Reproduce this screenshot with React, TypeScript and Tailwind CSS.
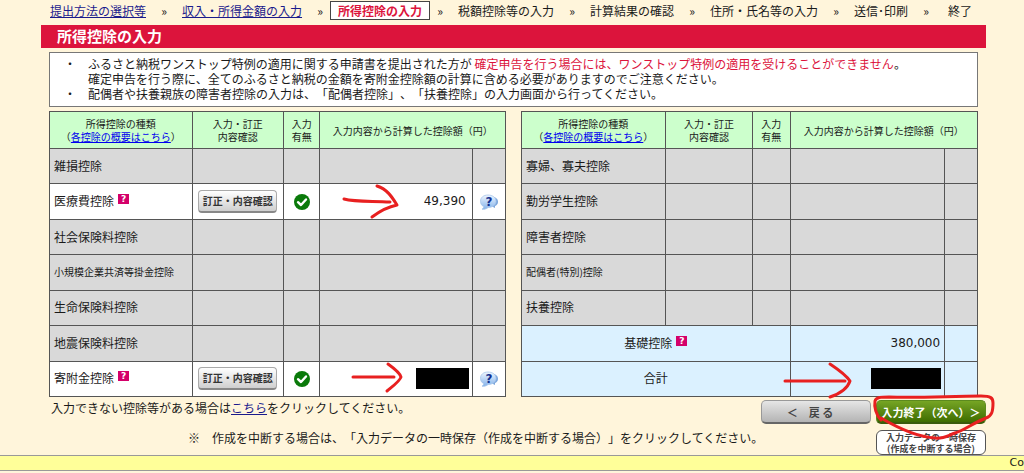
import type { ReactNode } from "react"

type Row = {
    name: string
    small?: boolean
    help?: boolean
    active?: boolean
    amount?: string
    hidden?: boolean
    arrow?: ReactNode
}

const steps = ["税額控除等の入力", "計算結果の確認", "住所・氏名等の入力", "送信･印刷"]

function Arrow({ shaft, head, className }: { shaft: string, head: string, className: string }) {
    return (
        <svg className={`absolute pointer-events-none ${className}`} width="70" height="40" viewBox="0 0 70 40" fill="none" stroke="#e82020" strokeWidth="3" strokeLinecap="round" strokeLinejoin="round" aria-hidden="true">
            <path d={shaft} />
            <path d={head} />
        </svg>
    )
}

const leftRows: Row[] = [
    { name: "雑損控除" },
    {
        name: "医療費控除",
        help: true,
        active: true,
        amount: "49,390",
        arrow: <Arrow className="right-[67px] -top-px" shaft="M9 16C20 19 35 18 55 19" head="M42 3C52 6 57 14 62 22C52 24 45 28 37 34" />,
    },
    { name: "社会保険料控除" },
    { name: "小規模企業共済等掛金控除", small: true },
    { name: "生命保険料控除" },
    { name: "地震保険料控除" },
    {
        name: "寄附金控除",
        help: true,
        active: true,
        hidden: true,
        arrow: <Arrow className="right-[67px] -top-px" shaft="M18 16H59" head="M53 3C60 8 65 12 66 16C65 20 58 25 52 30" />,
    },
]

const rightRows: Row[] = [
    { name: "寡婦、寡夫控除" },
    { name: "勤労学生控除" },
    { name: "障害者控除" },
    { name: "配偶者(特別)控除", small: true },
    { name: "扶養控除" },
]

const cell = "border border-[#555] p-0"

function Sep() {
    return <span className="w-9 shrink-0 text-center">»</span>
}

function HelpMark() {
    return (
        <button type="button" aria-label="ヘルプ" className="ml-1 inline-flex h-[10px] w-[11px] items-center justify-center bg-[#d4006a] align-[4px] font-['DejaVu_Sans',sans-serif] text-[9px] leading-[10px] font-bold text-white">
            ?
        </button>
    )
}

function CheckMark() {
    return (
        <svg className="mx-auto block" width="16" height="16" viewBox="0 0 16 16" role="img" aria-label="入力あり">
            <circle cx="8" cy="8" r="8" fill="#0a7a0a" />
            <path d="M4 8.2L7 11L12 5.5" fill="none" stroke="#fff" strokeWidth="2.4" strokeLinecap="round" strokeLinejoin="round" />
        </svg>
    )
}

function HelpBubble() {
    return (
        <button type="button" aria-label="計算の説明" className="mx-auto block">
            <svg width="18" height="16" viewBox="0 0 18 16">
                <defs>
                    <linearGradient id="bubble" x1="0" y1="0" x2="0" y2="1">
                        <stop offset="0" stopColor="#eef6ff" />
                        <stop offset="1" stopColor="#84b2ea" />
                    </linearGradient>
                </defs>
                <path d="M12 3C16 3 18 5 18 8C18 10 16.500 11.500 15 12L15 14L12 12.500Z" fill="#7ba6dc" />
                <path d="M8 1C12.500 1 16 3.500 16 7.200C16 11 12.500 13.500 8 13.500C7 14.800 4.500 15.500 2 15.300C3 14.600 3.700 13.600 3.600 12.600C1.500 11.500 0.500 9.500 0.500 7.200C0.500 3.500 3.500 1 8 1Z" fill="url(#bubble)" stroke="#a9c6ea" strokeWidth="0.800" />
                <text x="9" y="12" textAnchor="middle" fontSize="12" fontWeight="700" fill="#12308f" fontFamily="DejaVu Sans, sans-serif">?</text>
            </svg>
        </button>
    )
}

function TableHead() {
    return (
        <thead>
            <tr className="h-[37px] bg-[#ccffcc] text-[10px] leading-[13px]">
                <th className={`${cell} font-normal`}>
                    所得控除の種類<br />
                    （<a href="#gaiyo" className="text-[#0000ee] underline">各控除の概要はこちら</a>）
                </th>
                <th className={`${cell} font-normal`}>入力・訂正<br />内容確認</th>
                <th className={`${cell} font-normal`}>入力<br />有無</th>
                <th colSpan={2} className={`${cell} font-normal`}>入力内容から計算した控除額（円）</th>
            </tr>
        </thead>
    )
}

function DeductionRow({ row }: { row: Row }) {
    return (
        <tr className={`h-[35px] ${row.active ? "bg-white" : "bg-[#d9d9d9]"}`}>
            <td className={`${cell} pb-0.5 pl-1 ${row.small ? "text-[10px]" : ""}`}>
                {row.name}
                {row.help && <HelpMark />}
            </td>
            <td className={cell}>
                {row.active && (
                    <button type="button" className="mx-auto block h-[23px] w-[79px] rounded-[4px] border border-[#aaa] border-b-2 border-b-[#888] bg-linear-to-b from-white to-[#cfcfcf] text-[10px] leading-[20px] font-bold text-[#333]">
                        訂正・内容確認
                    </button>
                )}
            </td>
            <td className={cell}>{row.active && <CheckMark />}</td>
            <td className={`${cell} relative text-right font-['DejaVu_Sans',sans-serif]`}>
                {row.amount && <span className="pr-[6px]">{row.amount}</span>}
                {row.hidden && <div className="mr-[3px] ml-auto h-[21px] w-[53px] bg-black"></div>}
                {row.arrow}
            </td>
            <td className={cell}>{row.active && <HelpBubble />}</td>
        </tr>
    )
}

export default function App() {
    return (
        <div className="min-h-screen overflow-x-hidden bg-[#fff5db] font-['Noto_Sans_CJK_JP',sans-serif] text-[12px] leading-[15px] text-[#1a1a1a] [text-spacing-trim:space-all]">
            <div className="pr-[38px] pl-[41px]">
                <nav className="flex h-[21px] items-center pl-[9px] whitespace-nowrap">
                    <a href="#teishutsu" className="text-[#1a1a8c] underline">提出方法の選択等</a>
                    <Sep />
                    <a href="#shotoku" className="text-[#1a1a8c] underline">収入・所得金額の入力</a>
                    <Sep />
                    <span className="-mx-2 border border-[#444] bg-white px-[7px] py-px font-bold text-[#dc143c]">所得控除の入力</span>
                    {steps.map((step) => (
                        <div key={step} className="flex">
                            <Sep />
                            <span>{step}</span>
                        </div>
                    ))}
                    <Sep />
                    <span className="ml-1">終了</span>
                </nav>

                <h1 className="mt-1 bg-[#dc143c] pb-0.5 pl-4 text-[15px] leading-[21px] font-bold text-white">所得控除の入力</h1>

                <ul className="mx-2 mt-1 border border-[#777] bg-white pt-[3px] pb-[5px] pl-[14px]">
                    <li className="flex gap-3">
                        <span>・</span>
                        <p>
                            ふるさと納税ワンストップ特例の適用に関する申請書を提出された方が <span className="text-[#dc143c]">確定申告を行う場合には、ワンストップ特例の適用を受けることができません</span>。<br />
                            確定申告を行う際に、全てのふるさと納税の金額を寄附金控除額の計算に含める必要がありますのでご注意ください。
                        </p>
                    </li>
                    <li className="flex gap-3">
                        <span>・</span>
                        <p>配偶者や扶養親族の障害者控除の入力は、「配偶者控除」、「扶養控除」の入力画面から行ってください。</p>
                    </li>
                </ul>

                <div className="mx-2 mt-1 grid grid-cols-2 gap-[15px]">
                    <table className="h-[286px] w-full table-fixed border-collapse">
                        <colgroup>
                            <col className="w-[31.3%]" />
                            <col className="w-[20%]" />
                            <col className="w-[8%]" />
                            <col className="w-[33.4%]" />
                            <col />
                        </colgroup>
                        <TableHead />
                        <tbody>
                            {leftRows.map((row) => <DeductionRow key={row.name} row={row} />)}
                        </tbody>
                    </table>

                    <table className="h-[286px] w-full table-fixed border-collapse">
                        <colgroup>
                            <col className="w-[31.5%]" />
                            <col className="w-[19.2%]" />
                            <col className="w-[8.2%]" />
                            <col className="w-[33.9%]" />
                            <col />
                        </colgroup>
                        <TableHead />
                        <tbody>
                            {rightRows.map((row) => <DeductionRow key={row.name} row={row} />)}
                            <tr className="h-[35px] bg-[#dbf1ff]">
                                <td colSpan={3} className={`${cell} pb-0.5 text-center`}>基礎控除<HelpMark /></td>
                                <td className={`${cell} pr-1 text-right font-['DejaVu_Sans',sans-serif]`}>380,000</td>
                                <td className={cell}></td>
                            </tr>
                            <tr className="h-[35px] bg-[#dbf1ff]">
                                <td colSpan={3} className={`${cell} pb-0.5 text-center`}>合計</td>
                                <td className={`${cell} relative`}>
                                    <div className="mr-[3px] ml-auto h-[21px] w-[70px] bg-black"></div>
                                    <Arrow className="right-[91px] -top-px" shaft="M2 20H62" head="M47 3C56 9 63 14 67 20C64 29 56 33 47 36" />
                                </td>
                                <td className={cell}></td>
                            </tr>
                        </tbody>
                    </table>
                </div>

                <div className="mt-[3px] flex items-start justify-between pl-[10px]">
                    <p>入力できない控除等がある場合は<a href="#kochira" className="text-[#1a1a8c] underline">こちら</a>をクリックしてください。</p>
                    <div className="flex gap-[5px]">
                        <button type="button" className="h-6 w-[110px] rounded-[5px] border border-[#999] border-b-2 border-b-[#666] bg-linear-to-b from-[#e6e6e6] to-[#b4b4b4] pr-3 text-[11px] leading-[20px] font-bold text-[#444]">
                            ＜　戻 る
                        </button>
                        <div className="relative">
                            <button type="button" className="block h-6 w-[110px] rounded-[5px] border border-[#5c8a1e] border-b-2 border-b-[#3a5c0c] bg-linear-to-b from-[#76a524] to-[#3f6d00] text-[11px] leading-[20px] font-bold whitespace-nowrap text-white">
                                入力終了（次へ）＞
                            </button>
                            <svg className="pointer-events-none absolute -top-[7px] -left-[5px] z-10" width="126" height="50" viewBox="0 0 126 50" fill="none" stroke="#e82020" strokeWidth="3" strokeLinecap="round" strokeLinejoin="round" aria-hidden="true">
                                <path d="M10 27C5 22 3 14 4 8C5 4 10 4 18 4C50 5 80 3 110 3C120 3 122 5 122 10C122 18 121 23 115 25C102 30 94 37 84 40C76 43 72 46 64 45C46 44 27 35 10 25" />
                            </svg>
                        </div>
                    </div>
                </div>

                <div className="mt-[6px] flex items-start justify-between">
                    <p className="pl-[147px]">※　作成を中断する場合は、「入力データの一時保存（作成を中断する場合）」をクリックしてください。</p>
                    <button type="button" className="flex h-[25px] w-[110px] shrink-0 flex-col items-center justify-center rounded-[6px] border border-[#555] bg-white font-bold whitespace-nowrap text-[#444]">
                        <span className="text-[9px] leading-[11px]">入力データの一時保存</span>
                        <span className="text-[9px] leading-[11px]">(作成を中断する場合)</span>
                    </button>
                </div>
            </div>

            <footer className="flex h-4 justify-end border-y border-[#999] bg-[#ffff99] font-['DejaVu_Sans',sans-serif] text-[11px] leading-[13px]">
                Co
            </footer>
        </div>
    )
}
